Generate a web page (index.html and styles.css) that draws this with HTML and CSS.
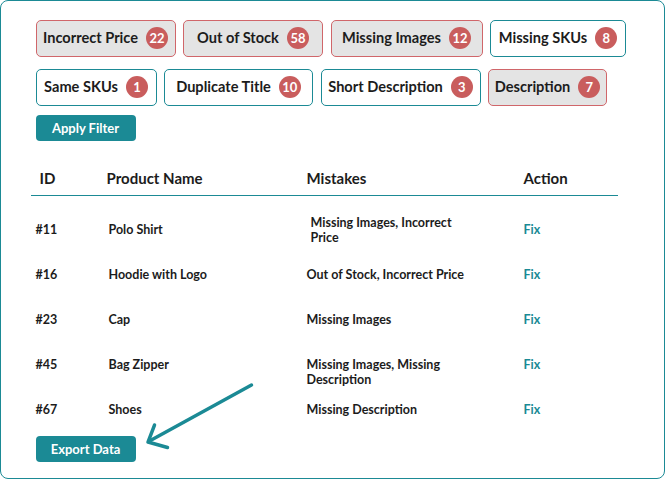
FILE: index.html
```html
<!DOCTYPE html>
<html>
<head>
<meta charset="utf-8">
<link rel="stylesheet" href="styles.css">
</head>
<body>
<div class="panel">
  <div class="chip-row">
    <span class="chip active">Incorrect Price <span class="badge">22</span></span>
    <span class="chip active">Out of Stock <span class="badge">58</span></span>
    <span class="chip active">Missing Images <span class="badge">12</span></span>
    <span class="chip">Missing SKUs <span class="badge">8</span></span>
  </div>
  <div class="chip-row second">
    <span class="chip">Same SKUs <span class="badge">1</span></span>
    <span class="chip">Duplicate Title <span class="badge">10</span></span>
    <span class="chip">Short Description <span class="badge">3</span></span>
    <span class="chip active">Description <span class="badge">7</span></span>
  </div>
  <button class="btn filter">Apply Filter</button>

  <div class="table">
    <div class="thead">
      <div class="th id">ID</div>
      <div class="th">Product Name</div>
      <div class="th">Mistakes</div>
      <div class="th">Action</div>
    </div>
    <div class="tbody">
      <div class="tr">
        <div class="td id">#11</div>
        <div class="td name">Polo Shirt</div>
        <div class="td mist shifted">Missing Images, Incorrect Price</div>
        <div class="td fix">Fix</div>
      </div>
      <div class="tr">
        <div class="td id">#16</div>
        <div class="td name">Hoodie with Logo</div>
        <div class="td mist">Out of Stock, Incorrect Price</div>
        <div class="td fix">Fix</div>
      </div>
      <div class="tr">
        <div class="td id">#23</div>
        <div class="td name">Cap</div>
        <div class="td mist">Missing Images</div>
        <div class="td fix">Fix</div>
      </div>
      <div class="tr">
        <div class="td id">#45</div>
        <div class="td name">Bag Zipper</div>
        <div class="td mist top">Missing Images, Missing Description</div>
        <div class="td fix">Fix</div>
      </div>
      <div class="tr">
        <div class="td id">#67</div>
        <div class="td name">Shoes</div>
        <div class="td mist">Missing Description</div>
        <div class="td fix">Fix</div>
      </div>
    </div>
  </div>

  <button class="btn export">Export Data</button>

  <svg class="arrow" width="120" height="75" viewBox="0 0 120 75">
    <path d="M110.5 6 L8.5 62" />
    <path d="M13.5 46 L7 63 L26.5 68.5" />
  </svg>
</div>
</body>
</html>
```

FILE: styles.css
```css
* { box-sizing: border-box; }

html, body {
  margin: 0;
  padding: 0;
  background: #ffffff;
}

body {
  font-family: "Lato", "Noto Sans", "Liberation Sans", sans-serif;
  color: #1c1c1c;
}

.panel {
  position: relative;
  width: 665px;
  height: 479px;
  border: 1.5px solid #1b8a95;
  border-radius: 8px;
  padding: 19px 0 0 34.5px;
}

.chip-row {
  display: flex;
  gap: 7.5px;
}

.chip-row.second {
  margin-top: 12px;
}

.chip {
  display: inline-flex;
  align-items: center;
  justify-content: center;
  height: 37px;
  padding: 0 0 2px 0;
  gap: 8px;
  border: 1px solid #1b8a95;
  border-radius: 5px;
  background: #ffffff;
  font-size: 14.6px;
  font-weight: 700;
  color: #1c1c1c;
  white-space: nowrap;
}

.chip-row:first-child .chip:nth-child(1) { width: 140px; }
.chip-row:first-child .chip:nth-child(2) { width: 140px; }
.chip-row:first-child .chip:nth-child(3) { width: 152px; }
.chip-row:first-child .chip:nth-child(4) { width: 136px; }
.chip-row.second .chip:nth-child(1) { width: 121px; }
.chip-row.second .chip:nth-child(2) { width: 149px; }
.chip-row.second .chip:nth-child(3) { width: 160px; }
.chip-row.second .chip:nth-child(4) { width: 119px; }

.chip.active {
  background: #e4e4e4;
  border-color: #d0666a;
}

.badge {
  display: inline-flex;
  align-items: center;
  justify-content: center;
  width: 22px;
  height: 22px;
  border-radius: 50%;
  background: #c95d5d;
  color: #ffffff;
  font-size: 13px;
  font-weight: 700;
}

.btn {
  display: block;
  width: 100px;
  height: 26px;
  border: none;
  border-radius: 4px;
  background: #1b8a95;
  color: #ffffff;
  font-family: inherit;
  font-size: 13px;
  font-weight: 700;
  padding: 0;
}

.btn.filter {
  margin-top: 9px;
}

.table {
  margin-left: -5px;
  width: 587px;
}

.thead,
.tr {
  display: grid;
  grid-template-columns: 76px 200px 217px 94px;
}

.thead {
  height: 55px;
  align-items: end;
  padding-bottom: 7px;
  border-bottom: 1.5px solid #1b8a95;
}

.th {
  font-size: 15px;
  font-weight: 700;
  line-height: 20px;
  color: #1c1c1c;
}

.th.id {
  padding-left: 9px;
}

.tbody {
  padding-top: 12px;
}

.tr {
  height: 45px;
  align-items: center;
}

.td {
  font-size: 12.5px;
  font-weight: 700;
  line-height: 14.5px;
  color: #1c1c1c;
}

.td.id {
  padding-left: 5px;
}

.td.name {
  padding-left: 2px;
}

.td.mist {
  max-width: 166px;
}

.td.mist.shifted {
  padding-left: 4px;
  max-width: 164px;
}

.td.mist.top {
  align-self: start;
  padding-top: 15px;
}

.td.fix {
  color: #1b8a95;
}

.btn.export {
  margin-top: 3px;
}

.arrow {
  position: absolute;
  left: 140px;
  top: 378px;
  fill: none;
  stroke: #1b8a95;
  stroke-width: 3.5;
  stroke-linecap: round;
  stroke-linejoin: round;
}
```
